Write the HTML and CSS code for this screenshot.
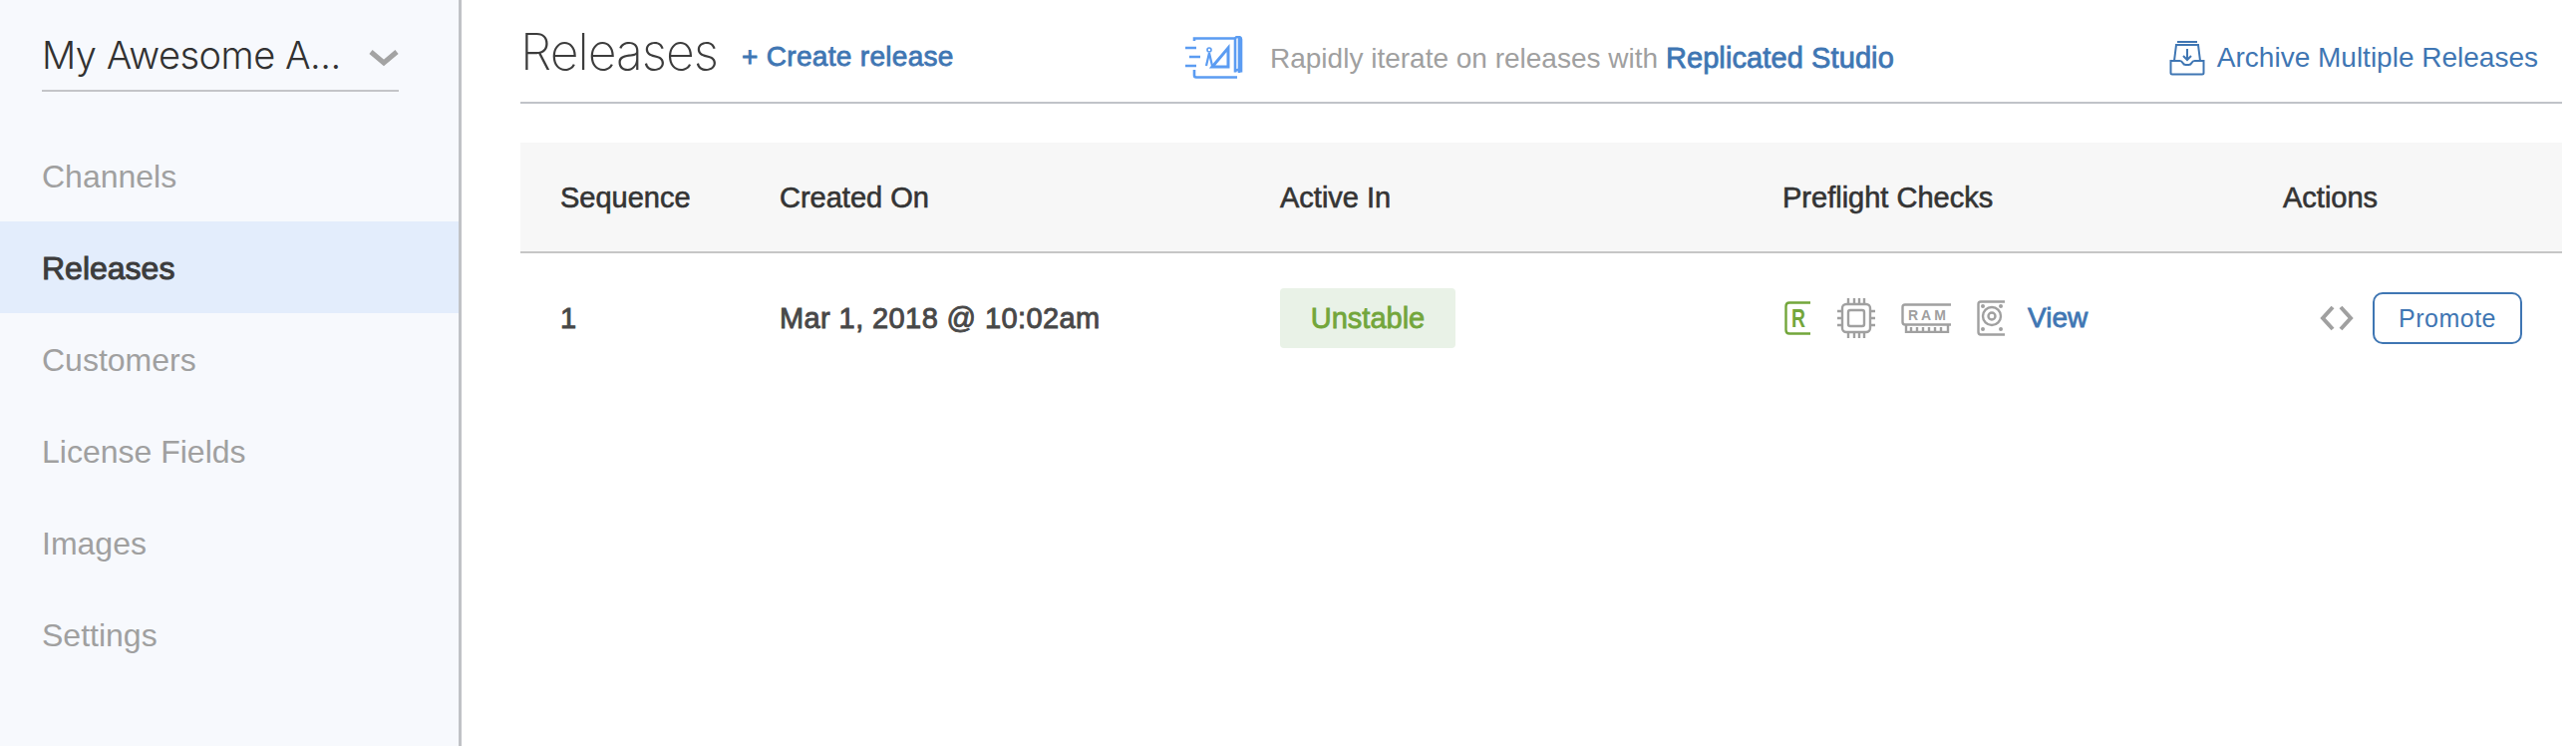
FILE: index.html
```html
<!DOCTYPE html>
<html lang="en">
<head>
    <meta charset="UTF-8">
    <meta name="viewport" content="width=device-width, initial-scale=1.0">
    <title>Releases</title>
    <link rel="stylesheet" href="styles.css">
</head>
<body>
    <div class="layout">
        <aside class="sidebar">
            <div class="app-select">
                <span class="app-name">My Awesome A...</span>
                <svg class="chevron" width="30" height="18" viewBox="0 0 30 18"><path d="M2 3l13 11L28 3" fill="none" stroke="#a3a3a3" stroke-width="5"/></svg>
            </div>
            <nav class="nav">
                <a class="nav-item">Channels</a>
                <a class="nav-item active">Releases</a>
                <a class="nav-item">Customers</a>
                <a class="nav-item">License Fields</a>
                <a class="nav-item">Images</a>
                <a class="nav-item">Settings</a>
            </nav>
        </aside>

        <main class="main">
            <header class="page-header">
                <div class="header-left">
                    <h1>Releases</h1>
                    <a class="create-link">+ Create release</a>
                </div>
                <div class="studio">
                    <svg class="studio-icon" width="60" height="44" viewBox="0 0 60 44" fill="none" stroke="#5b9cf2" stroke-width="2.6">
                        <path d="M10 5V2.500h42M55 2v35M10 34v5.500q0 2 2 2h41"/>
                        <path d="M51 3.500q0-2.500 3-2.500t3 2.500v33q0-2.500-3-2.500t-3 2.500z"/>
                        <path d="M1 12h11M5 21h11M1 30h11"/>
                        <path d="M44 12v19H28z" stroke-width="3"/>
                        <path d="M22 30l3-13 3 13" stroke-width="2.200"/>
                        <circle cx="25" cy="14" r="2" stroke-width="1.600"/>
                    </svg>
                    <span class="studio-text">Rapidly iterate on releases with <a class="studio-link">Replicated Studio</a></span>
                </div>
                <a class="archive">
                    <svg class="archive-icon" width="36" height="36" viewBox="0 0 36 36" fill="none" stroke="#3f76b3" stroke-width="2">
                        <path d="M8 2h20M5 21L7 5h22l2 16"/>
                        <path d="M1.500 21h9q2 0 3 2t3 2h3q2 0 3-2t3-2h9v12q0 1.500-1.500 1.500H3q-1.500 0-1.500-1.500z"/>
                        <path d="M18 9v11M14 16l4 4 4-4"/>
                    </svg>
                    Archive Multiple Releases
                </a>
            </header>

            <div class="table">
                <div class="row head">
                    <div class="cell">Sequence</div>
                    <div class="cell">Created On</div>
                    <div class="cell">Active In</div>
                    <div class="cell">Preflight Checks</div>
                    <div class="cell">Actions</div>
                </div>
                <div class="row body-row">
                    <div class="cell">1</div>
                    <div class="cell">Mar 1, 2018 @ 10:02am</div>
                    <div class="cell"><span class="badge">Unstable</span></div>
                    <div class="cell checks">
                        <svg class="check-r" width="27" height="34" viewBox="0 0 27 34" fill="none">
                            <path d="M26 1.500H5Q1.500 1.500 1.500 5v24q0 3.500 3.500 3.500h21" stroke="#73a63b" stroke-width="2.400"/>
                            <text x="7" y="26" class="r-letter" textLength="14" lengthAdjust="spacingAndGlyphs">R</text>
                        </svg>
                        <svg class="check-cpu" width="38" height="40" viewBox="0 0 38 40" fill="none" stroke="#a0a0a0" stroke-width="2.400">
                            <rect x="5" y="6" width="28" height="28" rx="4"/>
                            <rect x="11" y="12" width="16" height="16" rx="2"/>
                            <path d="M11 0v6M17 0v6M22 0v6M27 0v6M11 34v6M17 34v6M22 34v6M27 34v6M0 13h5M0 20h5M0 27h5M33 13h5M33 20h5M33 27h5"/>
                        </svg>
                        <svg class="check-ram" width="50" height="30" viewBox="0 0 50 30" fill="none" stroke="#a0a0a0" stroke-width="2.400">
                            <path d="M50 1.500H4Q1.500 1.500 1.500 4v15q0 2.500 2.500 2.500h46"/>
                            <path d="M5 22v7h42v-7M10 24v4M16 24v4M22 24v4M28 24v4M34 24v4M40 24v4"/>
                            <text x="7" y="17" class="ram-letters">RAM</text>
                        </svg>
                        <svg class="check-disk" width="28" height="36" viewBox="0 0 28 36" fill="none" stroke="#a0a0a0" stroke-width="2.400">
                            <path d="M28 1.500H4Q1.500 1.500 1.500 4v28q0 2.500 2.500 2.500h24"/>
                            <circle cx="15" cy="16" r="9"/>
                            <circle cx="15" cy="16" r="3.500"/>
                            <circle cx="6" cy="6" r="2" fill="#a0a0a0" stroke="none"/>
                            <circle cx="24" cy="6" r="2" fill="#a0a0a0" stroke="none"/>
                            <circle cx="6" cy="29" r="2" fill="#a0a0a0" stroke="none"/>
                            <circle cx="24" cy="29" r="2" fill="#a0a0a0" stroke="none"/>
                        </svg>
                        <a class="view-link">View</a>
                    </div>
                    <div class="cell actions">
                        <svg class="code-icon" width="34" height="26" viewBox="0 0 34 26" fill="none" stroke="#a0a0a0" stroke-width="4">
                            <path d="M13 2L3 13l10 11M21 2l10 11-10 11"/>
                        </svg>
                        <button class="promote" type="button">Promote</button>
                    </div>
                </div>
            </div>
        </main>
    </div>
</body>
</html>
```

FILE: styles.css
```css
body {
    font-family: "Liberation Sans", Arial, sans-serif;
    margin: 0;
    background-color: #fff;
    color: #404040;
}
a {
    cursor: pointer;
}
.layout {
    display: flex;
    height: 748px;
    overflow: hidden;
}

/* sidebar */
.sidebar {
    width: 460px;
    flex: none;
    background-color: #f7f9fd;
    border-right: 3px solid #c0c2c6;
}
.app-select {
    display: flex;
    align-items: center;
    justify-content: space-between;
    box-sizing: border-box;
    width: 358px;
    height: 92px;
    margin: 0 0 0 42px;
    padding-top: 20px;
    border-bottom: 2px solid #c4c5c8;
}
.app-name {
    font-family: Inter, sans-serif;
    font-weight: 300;
    font-size: 38px;
    letter-spacing: -0.5px;
    color: #323232;
}
.chevron {
    margin-top: 6px;
}
.nav {
    margin-top: 38px;
}
.nav-item {
    display: flex;
    align-items: center;
    box-sizing: border-box;
    height: 92px;
    padding: 2px 0 0 42px;
    font-size: 32px;
    color: #a0a0a0;
}
.nav-item.active {
    background-color: #e3edfc;
    color: #3c3c3c;
    -webkit-text-stroke: 1px #3c3c3c;
}

/* main */
.main {
    flex: 1;
    min-width: 0;
    padding: 0 14px 0 59px;
}
.page-header {
    display: flex;
    align-items: center;
    height: 102px;
    border-bottom: 2px solid #c0c3c8;
}
.header-left {
    display: flex;
    align-items: center;
    gap: 24px;
    width: 666px;
}
h1 {
    margin: 2px 0 0;
    font-family: Inter, sans-serif;
    font-weight: 200;
    font-size: 50px;
    letter-spacing: -1px;
    color: #3c3c3c;
}
.create-link {
    font-size: 28px;
    letter-spacing: 0.3px;
    color: #3f76b3;
    -webkit-text-stroke: 0.8px #3f76b3;
    margin-top: 12px;
}
.studio {
    display: flex;
    align-items: center;
    gap: 26px;
    font-size: 28px;
    color: #a0a0a0;
    margin-top: 14px;
}
.studio-link {
    font-size: 29px;
    letter-spacing: 0.1px;
    color: #3f76b3;
    -webkit-text-stroke: 0.8px #3f76b3;
}
.archive {
    display: flex;
    align-items: center;
    gap: 12px;
    font-size: 28px;
    color: #3f76b3;
    margin-left: auto;
    margin-right: 24px;
    margin-top: 14px;
}

/* table */
.table {
    margin-top: 40px;
}
.row {
    display: grid;
    grid-template-columns: 220px 502px 504px 502px 1fr;
    align-items: center;
    font-size: 29px;
}
.cell {
    padding-left: 40px;
}
.head {
    height: 108px;
    padding-top: 1px;
    box-sizing: content-box;
    margin-top: -1px;
    background-color: #f7f7f7;
    border-bottom: 2px solid #c6c6c6;
    color: #343434;
    -webkit-text-stroke: 0.6px #343434;
}
.body-row {
    height: 130px;
    letter-spacing: 0.4px;
    color: #484848;
    -webkit-text-stroke: 0.9px #484848;
}
.badge {
    display: inline-block;
    width: 176px;
    height: 60px;
    line-height: 60px;
    letter-spacing: 0;
    text-align: center;
    background-color: #e9f2e7;
    border-radius: 4px;
    color: #73a63b;
    -webkit-text-stroke: 0.8px #73a63b;
}
.checks {
    display: flex;
    align-items: center;
    padding-left: 42px;
    letter-spacing: 0;
    -webkit-text-stroke: 0;
}
.check-cpu {
    margin-left: 26px;
}
.check-ram {
    margin-left: 26px;
}
.check-disk {
    margin-left: 26px;
}
.r-letter {
    font-family: "Liberation Sans", sans-serif;
    font-weight: bold;
    font-size: 25px;
    fill: #73a63b;
}
.ram-letters {
    font-family: "Liberation Sans", sans-serif;
    font-weight: bold;
    font-size: 14px;
    letter-spacing: 3px;
    fill: #a0a0a0;
    stroke: none;
}
.view-link {
    margin-left: 23px;
    font-size: 28px;
    color: #3f76b3;
    -webkit-text-stroke: 0.8px #3f76b3;
}
.actions {
    display: flex;
    align-items: center;
    justify-content: flex-end;
    gap: 19px;
    padding-right: 40px;
    letter-spacing: 0;
}
.promote {
    width: 150px;
    height: 52px;
    background: #fff;
    border: 2px solid #3f76b3;
    border-radius: 10px;
    color: #3f76b3;
    font-family: "Liberation Sans", Arial, sans-serif;
    font-size: 25px;
    letter-spacing: 0.5px;
    cursor: pointer;
    -webkit-text-stroke: 0;
}
```
